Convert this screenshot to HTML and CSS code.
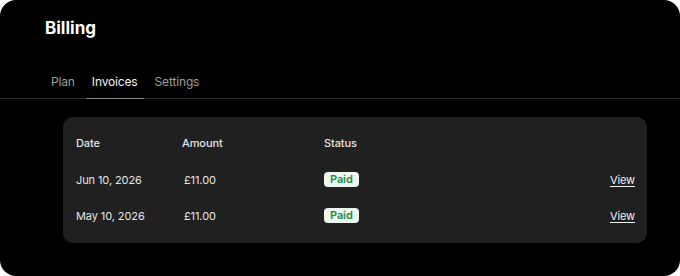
FILE: index.html
```html
<!DOCTYPE html>
<html lang="en">
<head>
  <meta charset="UTF-8">
  <meta name="viewport" content="width=device-width, initial-scale=1.0">
  <title>Billing</title>
  <link rel="stylesheet" href="styles.css">
</head>
<body>
  <div class="panel">
    <h1 class="title">Billing</h1>

    <nav class="tabs">
      <a class="tab">Plan</a>
      <a class="tab active">Invoices</a>
      <a class="tab">Settings</a>
    </nav>

    <div class="invoice-card">
      <div class="row head">
        <div class="cell">Date</div>
        <div class="cell">Amount</div>
        <div class="cell">Status</div>
        <div class="cell"></div>
      </div>
      <div class="row">
        <div class="cell">Jun 10, 2026</div>
        <div class="cell amount">£11.00</div>
        <div class="cell"><span class="badge">Paid</span></div>
        <div class="cell link-cell"><a class="view-link">View</a></div>
      </div>
      <div class="row">
        <div class="cell">May 10, 2026</div>
        <div class="cell amount">£11.00</div>
        <div class="cell"><span class="badge">Paid</span></div>
        <div class="cell link-cell"><a class="view-link">View</a></div>
      </div>
    </div>
  </div>
</body>
</html>
```

FILE: styles.css
```css
body {
  margin: 0;
  background-color: #fff;
  font-family: Inter, "Noto Sans", Arial, sans-serif;
}

.panel {
  height: 276px;
  background-color: #000;
  border-radius: 16px;
  overflow: hidden;
  color: #eee;
}

.title {
  margin: 0;
  padding: 18px 45px 0;
  font-size: 17px;
  line-height: 20px;
  font-weight: 700;
  color: #fff;
}

.tabs {
  display: flex;
  gap: 5px;
  margin-top: 26px;
  padding: 0 45px;
  border-bottom: 1px solid #2a2a2a;
}

.tab {
  padding: 10px 6px 8px;
  font-size: 12px;
  letter-spacing: -0.15px;
  line-height: 16px;
  color: #9c9c9c;
  border-bottom: 1px solid transparent;
  margin-bottom: -1px;
}

.tab.active {
  color: #f2f2f2;
  border-bottom-color: #8a8a8a;
}

.invoice-card {
  margin: 18px 33px 0 63px;
  padding: 8px 12px 10px 13px;
  background-color: #202020;
  border-radius: 10px;
}

.row {
  display: grid;
  grid-template-columns: 106px 142px 1fr auto;
  box-sizing: border-box;
  height: 36px;
  align-items: center;
  font-size: 11px;
  letter-spacing: -0.1px;
  color: #e4e4e4;
  border-top: 1px solid #252525;
}

.row.head {
  border-top: none;
  font-weight: 500;
}

.amount {
  padding-left: 2px;
}

.badge {
  display: inline-block;
  padding: 0 6px;
  line-height: 15px;
  border-radius: 4px;
  background-color: #eef7ef;
  color: #1f8a43;
  font-weight: 600;
}

.link-cell {
  text-align: right;
}

.view-link {
  color: #f0f0f0;
  text-decoration: underline;
  text-underline-offset: 2px;
}
```
